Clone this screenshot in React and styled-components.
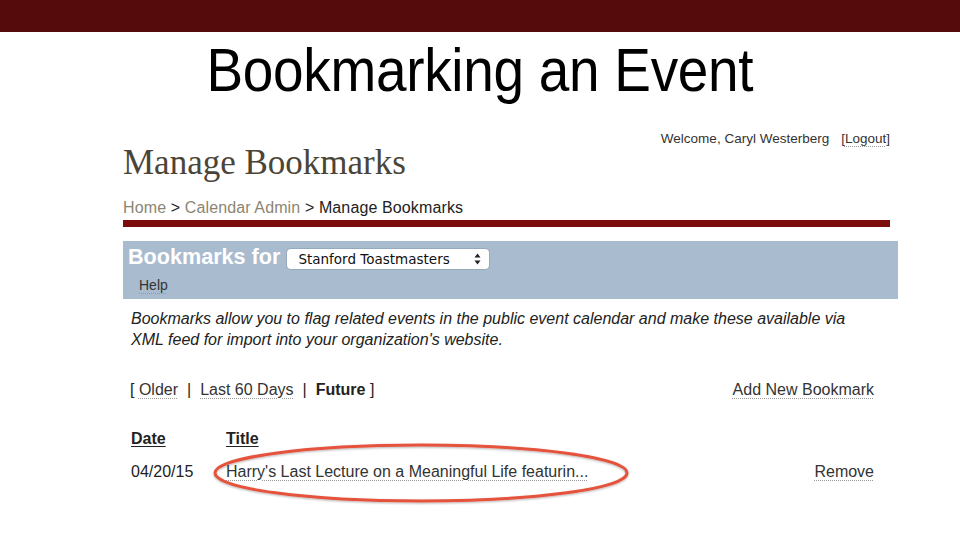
import styled, { createGlobalStyle } from "styled-components";

const GlobalStyle = createGlobalStyle`
  html, body {
    margin: 0;
    padding: 0;
    background: #ffffff;
  }
  body {
    width: 960px;
    height: 540px;
    overflow: hidden;
    font-family: "Liberation Sans", Arial, sans-serif;
  }
`;

const Slide = styled.div`
  position: relative;
  width: 960px;
  height: 540px;
  background: #ffffff;
`;

const TopBar = styled.div`
  height: 32px;
  background: #550b0c;
`;

const SlideTitle = styled.h1`
  margin: 8px 0 0;
  font-family: "Liberation Sans", Arial, sans-serif;
  font-weight: normal;
  font-size: 61px;
  line-height: 60px;
  color: #000000;
  text-align: center;
  span {
    display: inline-block;
    transform: scaleX(0.9);
    letter-spacing: -0.3px;
  }
`;

const Screen = styled.div`
  width: 767px;
  margin: 31px 0 0 123px;
  color: #2b2b2b;
`;

const Header = styled.div`
  display: flex;
  justify-content: space-between;
  align-items: flex-start;
`;

const PageHeading = styled.h2`
  margin: 12px 0 0;
  font-family: "Liberation Serif", "Times New Roman", serif;
  font-weight: normal;
  font-size: 35px;
  line-height: 40px;
  color: #4b4538;
`;

const Welcome = styled.div`
  font-size: 13.5px;
  line-height: 16px;
  color: #333333;
`;

const DottedLink = styled.a`
  color: ${(p) => p.$tone || "#333333"};
  text-decoration: underline dotted #9a9a9a;
  text-underline-offset: 3px;
  text-decoration-thickness: 1px;
  cursor: pointer;
`;

const Logout = styled.span`
  margin-left: 12px;
`;

const Crumbs = styled.div`
  margin-top: 15px;
  font-size: 16px;
  line-height: 20px;
  letter-spacing: 0.12px;
  color: #222222;
`;

const CrumbLink = styled.a`
  color: #8c8572;
  text-decoration: none;
`;

const Rule = styled.div`
  margin-top: 2px;
  height: 7px;
  background: #7b0d0d;
`;

const Band = styled.div`
  margin: 14px -8px 0 0;
  height: 58px;
  box-sizing: border-box;
  padding: 8px 0 0 5px;
  background: #a9bbcf;
`;

const BandRow = styled.div`
  display: flex;
  align-items: center;
  height: 20px;
`;

const BandLabel = styled.span`
  margin-bottom: 5px;
  font-size: 21.6px;
  font-weight: bold;
  line-height: 20px;
  color: #ffffff;
`;

const Picker = styled.div`
  display: flex;
  align-items: center;
  justify-content: space-between;
  box-sizing: border-box;
  width: 202px;
  height: 20px;
  margin-left: 7px;
  padding: 0 8px 0 11px;
  background: #ffffff;
  border-radius: 4px;
  box-shadow: 0 0 0 1px rgba(120, 135, 155, 0.35);
  font-family: "DejaVu Sans", Verdana, sans-serif;
  font-size: 13.5px;
  color: #111111;
`;

const HelpRow = styled.div`
  margin: 8px 0 0 11px;
  font-size: 14px;
  line-height: 16px;
`;

const Intro = styled.p`
  margin: 9px 0 0;
  padding: 0 16px 0 8px;
  font-size: 16px;
  line-height: 21px;
  font-style: italic;
  color: #222222;
`;

const FilterBar = styled.div`
  display: flex;
  justify-content: space-between;
  margin-top: 29.5px;
  padding: 0 16px 0 7px;
  font-size: 16px;
  line-height: 20px;
  color: #222222;
`;

const Sep = styled.span`
  margin: 0 9px;
`;

const Current = styled.b`
  color: #222222;
`;

const Table = styled.div`
  display: grid;
  grid-template-columns: 95px 1fr auto;
  row-gap: 13px;
  margin-top: 29.5px;
  padding: 0 16px 0 8px;
  font-size: 16px;
  line-height: 20px;
  color: #222222;
`;

const HeadCell = styled.div`
  font-weight: bold;
  text-decoration: underline;
  text-underline-offset: 2px;
`;

const Cell = styled.div`
  text-align: ${(p) => (p.$right ? "right" : "left")};
`;

const Circle = styled.svg`
  position: absolute;
  left: 210px;
  top: 440px;
  overflow: visible;
`;

const Arrows = () => (
  <svg width="7" height="12" viewBox="0 0 7 12">
    <path d="M3.5 0.5 L6.5 4.5 L0.5 4.5 Z" fill="#222" />
    <path d="M3.5 11.5 L6.5 7.5 L0.5 7.5 Z" fill="#222" />
  </svg>
);

const App = () => (
  <Slide>
    <GlobalStyle />
    <TopBar />
    <SlideTitle>
      <span>Bookmarking an Event</span>
    </SlideTitle>

    <Screen>
      <Header>
        <PageHeading>Manage Bookmarks</PageHeading>
        <Welcome>
          Welcome, Caryl Westerberg
          <Logout>
            [<DottedLink>Logout</DottedLink>]
          </Logout>
        </Welcome>
      </Header>

      <Crumbs>
        <CrumbLink>Home</CrumbLink> &gt; <CrumbLink>Calendar Admin</CrumbLink> &gt; Manage Bookmarks
      </Crumbs>
      <Rule />

      <Band>
        <BandRow>
          <BandLabel>Bookmarks for</BandLabel>
          <Picker>
            <span>Stanford Toastmasters</span>
            <Arrows />
          </Picker>
        </BandRow>
        <HelpRow>
          <DottedLink>Help</DottedLink>
        </HelpRow>
      </Band>

      <Intro>
        Bookmarks allow you to flag related events in the public event calendar and make these available via
        XML feed for import into your organization's website.
      </Intro>

      <FilterBar>
        <span>
          [ <DottedLink>Older</DottedLink>
          <Sep>|</Sep>
          <DottedLink>Last 60 Days</DottedLink>
          <Sep>|</Sep>
          <Current>Future</Current> ]
        </span>
        <DottedLink>Add New Bookmark</DottedLink>
      </FilterBar>

      <Table>
        <HeadCell>Date</HeadCell>
        <HeadCell>Title</HeadCell>
        <div />
        <Cell>04/20/15</Cell>
        <Cell>
          <DottedLink>Harry's Last Lecture on a Meaningful Life featurin...</DottedLink>
        </Cell>
        <Cell $right>
          <DottedLink>Remove</DottedLink>
        </Cell>
      </Table>
    </Screen>

    {/* red highlight drawn over the bookmarked row */}
    <Circle width="424" height="66" viewBox="0 0 424 66">
      <defs>
        <filter id="soft" x="-5%" y="-20%" width="110%" height="140%">
          <feDropShadow dx="0" dy="1" stdDeviation="1.2" floodColor="#000" floodOpacity="0.3" />
        </filter>
      </defs>
      <ellipse cx="211" cy="33" rx="206" ry="28" fill="none" stroke="#e5523d" strokeWidth="3" filter="url(#soft)" />
    </Circle>
  </Slide>
);

export default App;
